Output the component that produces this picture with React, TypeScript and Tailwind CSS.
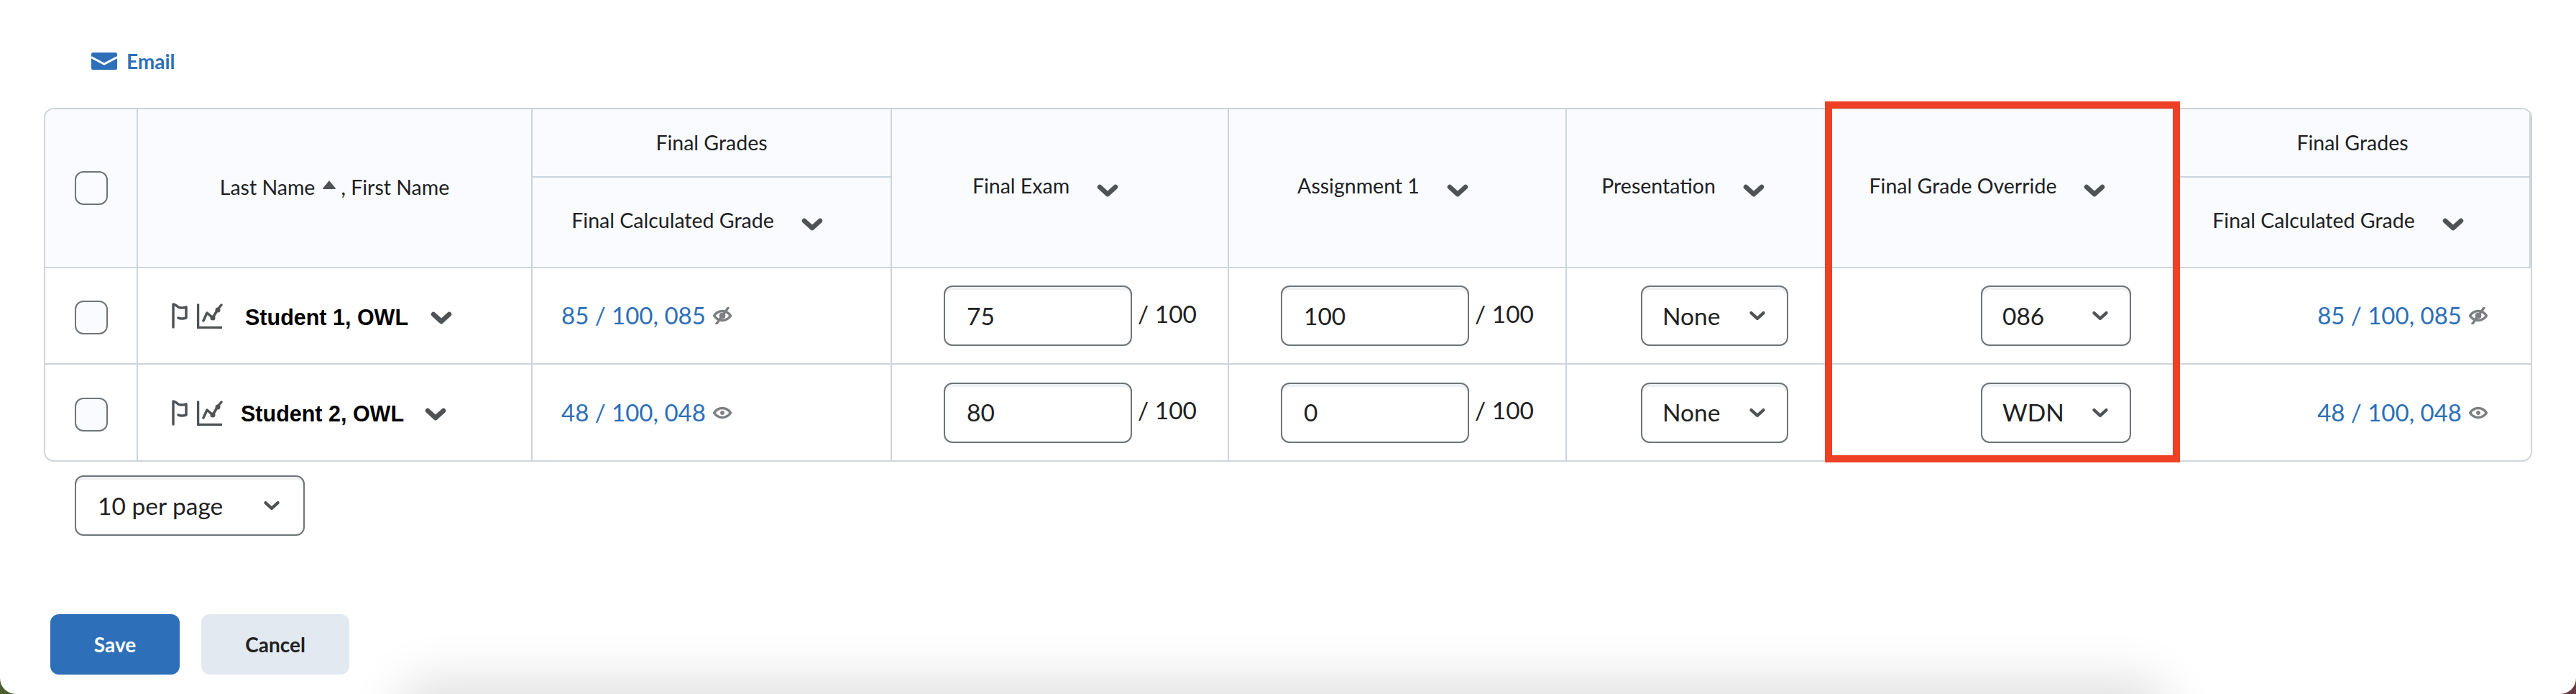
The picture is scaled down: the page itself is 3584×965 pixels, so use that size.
import React from 'react'

// Grade entry table, drawn at the 2x size of the screenshot

const Caret: React.FC<{ small?: boolean; className?: string }> = ({ small = false, className = '' }) => (
  <svg
    viewBox="0 0 30 18"
    className={`${small ? 'w-[24px] h-[14px]' : 'w-[30px] h-[18px]'} shrink-0 ${className}`}
    fill="none"
    stroke="#4f5356"
    strokeWidth={small ? 5.5 : 6.5}
    strokeLinecap="round"
    strokeLinejoin="round"
  >
    <polyline points="4,4 15,14 26,4" />
  </svg>
)

const FlagIcon = () => (
  <svg viewBox="0 0 23 36" className="w-[23px] h-[36px] shrink-0" fill="none" stroke="#4f5356" strokeWidth={3.5} strokeLinecap="round" strokeLinejoin="round">
    <path d="M2 34V2c3 0 4 2 7 4 4 2 7 1 11 0v15c-4 1-7 2-11 0" />
  </svg>
)

const ChartIcon = () => (
  <svg viewBox="0 0 36 36" className="w-[36px] h-[36px] shrink-0" fill="none" stroke="#4f5356" strokeLinecap="round" strokeLinejoin="round">
    <path d="M1.5 1.5V34.5H35" strokeWidth={3.5} strokeLinecap="butt" strokeLinejoin="miter" />
    <path d="M9 25L14 14L22 21L29 9L34 3" strokeWidth={3.5} />
    <circle cx="22" cy="21" r="3.5" fill="#4f5356" strokeWidth={0} />
    <circle cx="29" cy="10" r="3.5" fill="#4f5356" strokeWidth={0} />
  </svg>
)

const EyeIcon: React.FC<{ off?: boolean }> = ({ off = false }) => (
  <svg viewBox="0 0 26 24" className="w-[26px] h-[24px] shrink-0" fill="none" stroke="#7d8082" strokeWidth={3.5}>
    <path d="M1.5 12C5 7 9 5.5 13 5.5S21 7 24.5 12C21 17 17 18.5 13 18.5S5 17 1.5 12Z" />
    <circle cx="13" cy="12" r={off ? 4 : 2.5} fill="#7d8082" strokeWidth={1} />
    {off && <line x1="21" y1="1" x2="5" y2="23" strokeWidth={3.5} strokeLinecap="round" />}
  </svg>
)

const fieldClass =
  'flex items-center h-[84px] rounded-[12px] border-2 border-[#6e7477] bg-white shadow-[inset_0_4px_0_#eef0f2] text-[33.5px] text-[#202122]'

const SelectBox: React.FC<{ value: string; className: string }> = ({ value, className }) => (
  <div className={`${fieldClass} justify-between ${className}`}>
    <span>{value}</span>
    <Caret small />
  </div>
)

const ScoreInput: React.FC<{ value: string }> = ({ value }) => (
  <div className="flex items-center pl-[72px]">
    <div className={`${fieldClass} w-[262px] pl-[30px]`}>{value}</div>
    <span className="ml-[8px] -mt-[6px] text-[33.5px] text-[#202122]">/ 100</span>
  </div>
)

const Checkbox: React.FC<{ className?: string }> = ({ className = '' }) => (
  <div className={`mx-auto w-[46px] h-[47px] rounded-[12px] border-2 border-[#6e7477] bg-[#f9fbff] ${className}`} />
)

const HeaderLabel: React.FC<{ label: string }> = ({ label }) => (
  <div className="flex items-center justify-center pr-[40px] gap-[38px]">
    <span className="-mt-[6px]">{label}</span>
    <Caret className="mt-[6px]" />
  </div>
)

const thClass = 'bg-[#f9fbff] border-r-2 border-b-2 border-[#cdd5dc] font-normal p-0 align-middle'
const tdClass = 'border-r-2 border-[#cdd5dc] p-0 align-middle'

interface Student {
  name: string
  namePad: string
  caretGap: string
  rowHeight: string
  grade: string
  hidden: boolean
  exam: string
  assignment: string
  override: string
}

const students: Student[] = [
  { name: 'Student 1, OWL', namePad: 'ml-[31px]', caretGap: 'ml-[31px]', rowHeight: 'h-[134px]', grade: '85 / 100, 085', hidden: true, exam: '75', assignment: '100', override: '086' },
  { name: 'Student 2, OWL', namePad: 'ml-[25px]', caretGap: 'ml-[29px]', rowHeight: 'h-[133px]', grade: '48 / 100, 048', hidden: false, exam: '80', assignment: '0', override: 'WDN' },
]

export default function App() {
  return (
    <div className="relative w-[3584px] h-[965px] overflow-hidden bg-[linear-gradient(90deg,#4c5f2d_0%,#4c5f2d_50%,#6b3a45_50%,#6b3a45_100%)] font-['Lato','Liberation_Sans',sans-serif]">
      <div className="h-full bg-white rounded-b-[22px] pt-[73px]">
        <div className="flex items-center ml-[127px] h-[24px] gap-[13px] text-[28px] font-bold text-[#2d6fb8]">
          <svg viewBox="0 0 36 24" className="w-[36px] h-[24px] shrink-0">
            <rect x="0" y="0" width="36" height="24" rx="2.5" fill="#2d6fb8" />
            <path d="M0 6.5L18 16L36 6.5" fill="none" stroke="#fff" strokeWidth="3" />
          </svg>
          <span>Email</span>
        </div>

        <div className="ml-[61px] mt-[53px] w-[3462px] h-[492px] rounded-[14px] border-2 border-[#cdd5dc] overflow-hidden">
          <table className="table-fixed w-full border-separate border-spacing-0 text-[28.5px] text-[#202122]">
            <colgroup>
              <col className="w-[129px]" />
              <col className="w-[549px]" />
              <col className="w-[500px]" />
              <col className="w-[469px]" />
              <col className="w-[470px]" />
              <col className="w-[365px]" />
              <col className="w-[482px]" />
              <col />
            </colgroup>
            <thead>
              <tr className="h-[95px]">
                <th rowSpan={2} className={thClass}>
                  <Checkbox />
                </th>
                <th rowSpan={2} className={thClass}>
                  <div className="flex items-center justify-center gap-[10px] -mt-[3px]">
                    <span>Last Name</span>
                    <svg viewBox="0 0 20 14" className="w-[20px] h-[14px] -mt-[6px]">
                      <path d="M10 1L19 12Q19 13 18 13H2Q1 13 1 12Z" fill="#4f5356" />
                    </svg>
                    <span className="-ml-[4px]">, First Name</span>
                  </div>
                </th>
                <th className={thClass}>Final Grades</th>
                <th rowSpan={2} className={thClass}>
                  <HeaderLabel label="Final Exam" />
                </th>
                <th rowSpan={2} className={thClass}>
                  <HeaderLabel label="Assignment 1" />
                </th>
                <th rowSpan={2} className={thClass}>
                  <HeaderLabel label="Presentation" />
                </th>
                <th rowSpan={2} className={thClass}>
                  <HeaderLabel label="Final Grade Override" />
                </th>
                <th className={`${thClass} border-r-0`}>Final Grades</th>
              </tr>
              <tr className="h-[126px]">
                <th className={thClass}>
                  <HeaderLabel label="Final Calculated Grade" />
                </th>
                <th className={`${thClass} border-r-0`}>
                  <HeaderLabel label="Final Calculated Grade" />
                </th>
              </tr>
            </thead>
            <tbody>
              {students.map((s, i) => {
                const rowBorder = i === 0 ? 'border-b-2' : ''
                const gradeText = (
                  <>
                    <span className="text-[33px] text-[#2d6fb8]">{s.grade}</span>
                    <EyeIcon off={s.hidden} />
                  </>
                )
                return (
                  <tr key={s.name} className={s.rowHeight}>
                    <td className={`${tdClass} ${rowBorder}`}>
                      <Checkbox className="mt-[5px]" />
                    </td>
                    <td className={`${tdClass} ${rowBorder}`}>
                      <div className="flex items-center pl-[47px]">
                        <FlagIcon />
                        <div className="ml-[12px]">
                          <ChartIcon />
                        </div>
                        <span className={`${s.namePad} mt-[5px] font-['Liberation_Sans',sans-serif] font-bold text-[30.5px] text-black`}>{s.name}</span>
                        <Caret className={`${s.caretGap} mt-[5px]`} />
                      </div>
                    </td>
                    <td className={`${tdClass} ${rowBorder}`}>
                      <div className="flex items-center gap-[10px] pl-[40px]">{gradeText}</div>
                    </td>
                    <td className={`${tdClass} ${rowBorder}`}>
                      <ScoreInput value={s.exam} />
                    </td>
                    <td className={`${tdClass} ${rowBorder}`}>
                      <ScoreInput value={s.assignment} />
                    </td>
                    <td className={`${tdClass} ${rowBorder}`}>
                      <div className="flex justify-end pr-[55px]">
                        <SelectBox value="None" className="w-[205px] pl-[28px] pr-[29px]" />
                      </div>
                    </td>
                    <td className={`${tdClass} ${rowBorder}`}>
                      <div className="flex justify-end pr-[60px]">
                        <SelectBox value={s.override} className="w-[209px] pl-[28px] pr-[29px]" />
                      </div>
                    </td>
                    <td className={`p-0 align-middle ${rowBorder} border-[#cdd5dc]`}>
                      <div className="flex items-center justify-end gap-[10px] pr-[60px]">{gradeText}</div>
                    </td>
                  </tr>
                )
              })}
            </tbody>
          </table>
        </div>

        <div className="ml-[104px] mt-[19px] w-[320px]">
          <SelectBox value="10 per page" className="pl-[30px] pr-[32px]" />
        </div>

        <div className="flex ml-[70px] mt-[109px] gap-[30px] text-[28px] font-bold">
          <button className="w-[180px] h-[84px] rounded-[12px] bg-[#2d6fb8] text-white">Save</button>
          <button className="w-[206px] h-[84px] rounded-[12px] bg-[#e3e9f1] text-[#202122]">Cancel</button>
        </div>
      </div>

      {/* highlight drawn on top of the override column */}
      <div className="absolute left-[2539px] top-[141px] w-[494px] h-[502px] border-[10px] border-[#ee4024]" />

      {/* soft shadow of whatever sits just below the crop */}
      <div className="absolute left-[600px] top-[990px] w-[2370px] h-[30px] rounded-[30px] shadow-[0_0_70px_45px_rgba(0,0,0,0.13)]" />
    </div>
  )
}
